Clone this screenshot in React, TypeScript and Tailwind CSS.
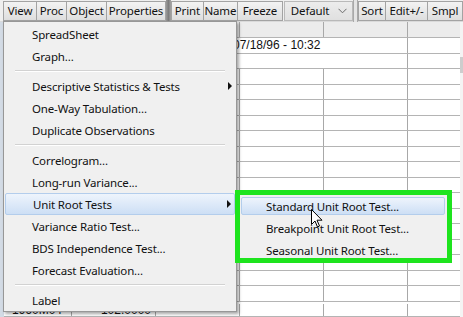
import React from "react";

const ui = "font-['Noto_Sans',sans-serif]";
const txt = "text-[11.5px] tracking-[-0.15px] text-[#111]";

function TbBtn({ label, w }: { label: string; w: string }) {
  return (
    <div
      className={`${w} h-[20px] -ml-px first:ml-0 flex items-center justify-center border border-[#a3a3a3] bg-gradient-to-b from-[#f3f3f3] to-[#dedede] ${txt} leading-none`}
    >
      {label}
    </div>
  );
}

function MenuItem({
  label,
  arrow,
  active,
}: {
  label: string;
  arrow?: boolean;
  active?: boolean;
}) {
  return (
    <div
      className={`relative h-[22px] flex items-center pt-px pl-[27px] ${txt} ${
        active
          ? "bg-gradient-to-b from-[#eef4fc] to-[#cddff5] border border-[#b3cdec] rounded-[2px] pl-[26px]"
          : ""
      }`}
    >
      {label}
      {arrow && (
        <span className="absolute right-[3px] top-1/2 -translate-y-1/2 w-0 h-0 border-y-[4px] border-y-transparent border-l-[4px] border-l-[#111]" />
      )}
    </div>
  );
}

function Sep() {
  return (
    <div className="h-[8px] flex flex-col justify-center px-[10px]">
      <div className="h-px bg-[#d2d2d2]" />
      <div className="h-px bg-white" />
    </div>
  );
}

function GridRow({
  obs,
  val,
  last,
}: {
  obs?: string;
  val?: string;
  last?: boolean;
}) {
  return (
    <div
      className={`h-[16px] flex border-b border-[#b4b4b4] text-[12px] font-['Liberation_Sans',sans-serif] text-[#111] ${
        last ? "leading-[12px] pt-[2px]" : "leading-[15px]"
      }`}
    >
      <div className="w-[68px] shrink-0 border-r border-[#a8a8a8] pl-[8px]">{obs}</div>
      <div className="w-[84px] shrink-0 border-r border-[#a8a8a8] text-right pr-[4px]">{val}</div>
      <div className="w-[84px] shrink-0 border-r border-[#a8a8a8]" />
      <div className="w-[84px] shrink-0 border-r border-[#a8a8a8]" />
      <div className="w-[84px] shrink-0 border-r border-[#a8a8a8]" />
      <div className="flex-1" />
    </div>
  );
}

export default function App() {
  const rows = Array.from({ length: 15 });
  return (
    <div className={`relative w-[463px] h-[317px] overflow-hidden bg-white ${ui}`}>
      {/* toolbar */}
      <div className="h-[22px] bg-[#efefef] flex items-center pl-[3px] border-b border-[#dadada]">
        <div className="flex items-center">
          <TbBtn label="View" w="w-[34px]" />
          <TbBtn label="Proc" w="w-[31px]" />
          <TbBtn label="Object" w="w-[41px]" />
          <TbBtn label="Properties" w="w-[60px]" />
        </div>
        <div className="w-[6px] h-[22px] bg-gradient-to-r from-[#9a9a9a] via-[#7d7d7d] to-[#a5a5a5]" />
        <div className="flex items-center">
          <TbBtn label="Print" w="w-[33px]" />
          <TbBtn label="Name" w="w-[35px]" />
          <TbBtn label="Freeze" w="w-[46px]" />
        </div>
        <div className={`ml-px w-[82px] h-[20px] flex items-center justify-between pl-[6px] pr-[5px] border border-[#b9b9b9] bg-gradient-to-b from-[#ececec] to-[#e0e0e0] ${txt}`}>
          <span>Default</span>
          <svg width="9" height="6" viewBox="0 0 9 6">
            <path d="M0.5 0.8 L4.5 4.8 L8.5 0.8" fill="none" stroke="#6a6a6a" strokeWidth="1" />
          </svg>
        </div>
        <div className="w-[6px] h-[22px] border-x border-[#a9a9a9] bg-[#e4e4e4]" />
        <div className="flex items-center">
          <TbBtn label="Sort" w="w-[28px]" />
          <TbBtn label="Edit+/-" w="w-[43px]" />
          <TbBtn label="Smpl" w="w-[36px]" />
        </div>
      </div>

      {/* spreadsheet */}
      <div className="flex h-[295px]">
        <div className="w-[4px] shrink-0 bg-[#d3dbe5]" />
        <div className="w-[456px] shrink-0 flex flex-col">
          <div className="h-[16px] flex bg-[#ececec] border-b border-[#b4b4b4]">
            <div className="w-[68px] shrink-0 border-r border-[#a8a8a8]" />
            <div className="w-[84px] shrink-0 border-r border-[#a8a8a8]" />
            <div className="w-[84px] shrink-0 border-r border-[#a8a8a8]" />
            <div className="w-[84px] shrink-0 border-r border-[#a8a8a8]" />
            <div className="w-[84px] shrink-0 border-r border-[#a8a8a8]" />
            <div className="flex-1" />
          </div>
          <div className="h-[16px] flex border-b border-[#b4b4b4] text-[12px] leading-[15px] font-['Liberation_Sans',sans-serif] text-[#111]">
            <div className="w-[404px] shrink-0 border-r border-[#a8a8a8] pl-[229px] whitespace-nowrap">
              07/18/96 - 10:32
            </div>
            <div className="flex-1" />
          </div>
          <div className="h-[16px] flex border-b border-[#b4b4b4]">
            <div className="w-[404px] shrink-0 border-r border-[#a8a8a8]" />
            <div className="flex-1" />
          </div>
          {rows.map((_, i) => (
            <GridRow key={i} />
          ))}
          <GridRow obs="1960M04" val="102.0000" last />
        </div>
        <div className="flex-1 relative bg-[#f4f4f4]">
          <div className="absolute left-0 top-[35px] w-full h-[16px] bg-[#cdcdcd]" />
        </div>
      </div>

      {/* main menu */}
      <div className="absolute left-[3px] top-[21px] w-[234px] border border-[#979797] bg-[#f0f0f0] px-px pt-px shadow-[2px_2px_3px_rgba(0,0,0,0.35)]">
        <MenuItem label="SpreadSheet" />
        <MenuItem label="Graph..." />
        <Sep />
        <MenuItem label="Descriptive Statistics & Tests" arrow />
        <MenuItem label="One-Way Tabulation..." />
        <MenuItem label="Duplicate Observations" />
        <Sep />
        <MenuItem label="Correlogram..." />
        <MenuItem label="Long-run Variance..." />
        <MenuItem label="Unit Root Tests" arrow active />
        <MenuItem label="Variance Ratio Test..." />
        <MenuItem label="BDS Independence Test..." />
        <MenuItem label="Forecast Evaluation..." />
        <Sep />
        <MenuItem label="Label" />
      </div>

      {/* submenu */}
      <div className="absolute left-[237px] top-[192px] w-[212px] h-[70px] bg-[#f0f0f0] border border-[#979797] pt-[2px] px-[3px]">
        <div className="h-[22px] flex items-center">
          <div className={`w-full h-[18px] flex items-center pt-px pl-[24px] ${txt} bg-gradient-to-b from-[#eef4fc] to-[#cddff5] border border-[#b3cdec] rounded-[2px]`}>
            Standard Unit Root Test...
          </div>
        </div>
        <div className={`h-[22px] flex items-center pt-px pl-[25px] ${txt}`}>
          Breakpoint Unit Root Test...
        </div>
        <div className={`h-[22px] flex items-center pt-px pl-[25px] ${txt}`}>
          Seasonal Unit Root Test...
        </div>
      </div>

      {/* green highlight box */}
      <div className="absolute left-[235px] top-[190px] w-[217px] h-[73px] border-[5px] border-[#1ee41e] pointer-events-none" />

      {/* mouse cursor */}
      <svg
        className="absolute left-[311px] top-[209px]"
        width="12"
        height="19"
        viewBox="0 0 12 19"
      >
        <path
          d="M0.5 0.5 L0.5 15.5 L4 12 L6.5 18 L8.5 17 L6 11.2 L11 11.2 Z"
          fill="#fff"
          stroke="#000"
          strokeWidth="1"
          strokeLinejoin="round"
        />
      </svg>
    </div>
  );
}
